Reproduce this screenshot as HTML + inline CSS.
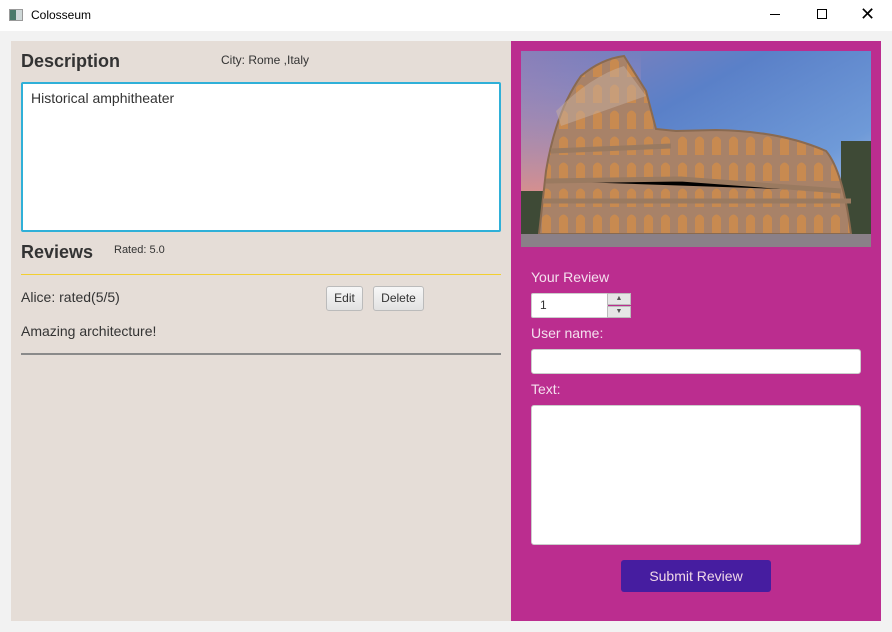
<!DOCTYPE html>
<html><head><style>
*{margin:0;padding:0;box-sizing:border-box}
body{width:892px;height:632px;background:#f2f2f2;font-family:"Liberation Sans",sans-serif;position:relative;overflow:hidden;color:#333}
.a{position:absolute}
</style></head><body>
<div class="a" style="left:0;top:0;width:892px;height:31px;background:#fff"></div>
<div class="a" style="left:9px;top:9px;width:14px;height:12px;border:1px solid #999;background:linear-gradient(90deg,#4a7a6a 0 50%,#cfd8d8 50%)"></div>
<div class="a" style="left:31px;top:8px;font-size:12px;color:#000">Colosseum</div>
<div class="a" style="left:770px;top:14px;width:10px;height:1px;background:#000"></div>
<div class="a" style="left:817px;top:9px;width:10px;height:10px;border:1px solid #000"></div>
<div class="a" style="left:860px;top:4px;font-size:18px;color:#000;line-height:20px">✕</div>

<div class="a" style="left:11px;top:41px;width:500px;height:580px;background:#e5ddd7"></div>
<div class="a" style="left:21px;top:51px;font-size:18px;font-weight:bold;color:#333">Description</div>
<div class="a" style="left:221px;top:53px;font-size:12px">City: Rome ,Italy</div>
<div class="a" style="left:21px;top:82px;width:480px;height:150px;background:#fff;border:2px solid #2fb0d8;border-radius:2px"></div>
<div class="a" style="left:31px;top:90px;font-size:14px">Historical amphitheater</div>
<div class="a" style="left:21px;top:242px;font-size:18px;font-weight:bold">Reviews</div>
<div class="a" style="left:114px;top:244px;font-size:11px">Rated: 5.0</div>
<div class="a" style="left:21px;top:274px;width:480px;height:1px;background:#f2cf30"></div>
<div class="a" style="left:21px;top:289px;font-size:14px">Alice: rated(5/5)</div>
<div class="a" style="left:326px;top:286px;width:37px;height:25px;border:1px solid #bbb;border-radius:3px;background:linear-gradient(#f7f7f7,#e2e2e2);font-size:12px;text-align:center;line-height:23px">Edit</div>
<div class="a" style="left:373px;top:286px;width:51px;height:25px;border:1px solid #bbb;border-radius:3px;background:linear-gradient(#f7f7f7,#e2e2e2);font-size:12px;text-align:center;line-height:23px">Delete</div>
<div class="a" style="left:21px;top:323px;font-size:14px">Amazing architecture!</div>
<div class="a" style="left:21px;top:353px;width:480px;height:2px;background:#8a8a8a"></div>

<div class="a" style="left:511px;top:41px;width:370px;height:580px;background:#bb2d8f"></div>
<svg class="a" style="left:521px;top:51px" width="350" height="196">
<defs>
<linearGradient id="s" x1="0" y1="0" x2="1" y2="1"><stop offset="0" stop-color="#8a7fb8"/><stop offset=".35" stop-color="#5a80c8"/><stop offset=".7" stop-color="#6f9ad8"/><stop offset="1" stop-color="#c8d4e8"/></linearGradient>
<linearGradient id="p" x1="0" y1="0" x2="0" y2="1"><stop offset="0" stop-color="#d89ab8" stop-opacity="0"/><stop offset="1" stop-color="#e89080"/></linearGradient>
<pattern id="ar" width="17" height="26" patternUnits="userSpaceOnUse"><rect width="17" height="26" fill="#a88268"/><path d="M4 26 V11 Q8.5 4 13 11 V26Z" fill="#c88a50"/></pattern>
</defs>
<rect width="350" height="196" fill="url(#s)"/>
<rect width="120" height="160" fill="url(#p)"/>
<rect x="320" y="90" width="30" height="95" fill="#3e4a36"/>
<rect x="0" y="140" width="25" height="45" fill="#3e4a36"/>
<path d="M18 183 L25 120 Q35 60 60 25 Q80 8 103 5 L125 40 L135 78 L155 80 L195 79 Q260 80 305 100 Q322 120 330 183 Z" fill="url(#ar)"/>
<path d="M18 183 L25 120 Q35 60 60 25 Q80 8 103 5 L125 40 L135 78 L155 80 L195 79 Q260 80 305 100 Q322 120 330 183 Z" fill="none" stroke="#8a6a50" stroke-width="2"/>
<path d="M25 130 L160 128 L320 140 M22 150 L330 150 M30 100 L150 95" stroke="#9a7a60" stroke-width="5"/>
<path d="M35 60 Q70 25 103 15 L125 45 L40 75Z" fill="#c8b0a0" opacity=".5"/>
<rect y="183" width="350" height="13" fill="#8a8088"/>
</svg>
<div class="a" style="left:531px;top:269px;font-size:14px;color:#f4e0ee">Your Review</div>
<div class="a" style="left:531px;top:293px;width:77px;height:25px;background:#fff;border:1px solid #ccc;border-radius:2px 0 0 2px"></div>
<div class="a" style="left:540px;top:298px;font-size:12px;color:#333">1</div>
<div class="a" style="left:607px;top:293px;width:24px;height:12px;background:#e6e6e6;border:1px solid #bbb;font-size:7px;text-align:center;line-height:10px;color:#555">▲</div>
<div class="a" style="left:607px;top:306px;width:24px;height:12px;background:#e6e6e6;border:1px solid #bbb;font-size:7px;text-align:center;line-height:10px;color:#555">▼</div>
<div class="a" style="left:531px;top:325px;font-size:14px;color:#f4e0ee">User name:</div>
<div class="a" style="left:531px;top:349px;width:330px;height:25px;background:#fff;border:1px solid #ccc;border-radius:3px"></div>
<div class="a" style="left:531px;top:381px;font-size:14px;color:#f4e0ee">Text:</div>
<div class="a" style="left:531px;top:405px;width:330px;height:140px;background:#fff;border:1px solid #ccc;border-radius:3px"></div>
<div class="a" style="left:621px;top:560px;width:150px;height:32px;background:#461da0;border-radius:3px;color:#f0d8e8;font-size:14px;text-align:center;line-height:32px">Submit Review</div>
</body></html>
